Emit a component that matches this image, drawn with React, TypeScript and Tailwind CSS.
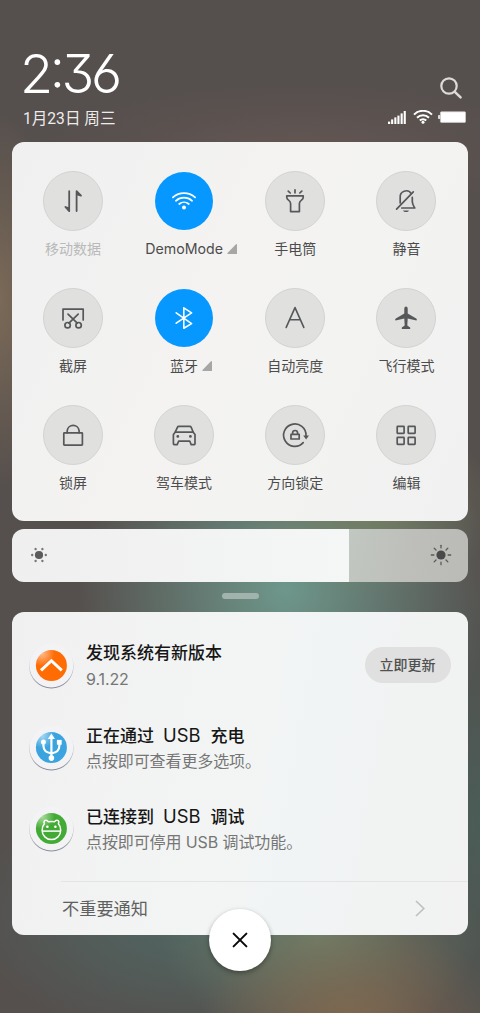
import type { ReactNode } from "react";

type Tile = {
  label: string;
  icon: ReactNode;
  active?: boolean;
  disabled?: boolean;
  expandable?: boolean;
};

const tiles: Tile[] = [
  {
    label: "移动数据",
    disabled: true,
    icon: (
      <g strokeWidth="1.8" strokeLinejoin="round" fill="currentColor">
        <path d="M26.2 20.2V40.2L22.4 36L26.2 37.4" />
        <path d="M33.6 40V20.2L38 24.6L33.6 23.2" />
      </g>
    ),
  },
  {
    label: "DemoMode",
    active: true,
    expandable: true,
    icon: (
      <g strokeWidth="1.7">
        <path d="M18.9 26.4A16.6 16.6 0 0 1 41.1 26.4" />
        <path d="M21.9 29.8A12.2 12.2 0 0 1 38.1 29.8" />
        <path d="M25.2 33A7.4 7.4 0 0 1 34.8 33" />
        <circle cx="30" cy="36.6" r="2" fill="currentColor" stroke="none" />
      </g>
    ),
  },
  {
    label: "手电筒",
    icon: (
      <>
        <path d="M21.8 24.8H38.2V26.6C38.2 29.4 34.4 29 34.4 32.6V40.6H25.6V32.6C25.6 29 21.8 29.4 21.8 26.6Z" />
        <path d="M30 18.8V21.8M23.2 20.1L25.2 22M36.8 20.1L34.8 22" />
      </>
    ),
  },
  {
    label: "静音",
    icon: (
      <>
        <path d="M24.2 32V26.5A6 6 0 0 1 35.2 22.6" />
        <path d="M36.3 26.3V30.5C36.3 33.5 37.6 35 38.8 37H25.8" />
        <path d="M20.6 38.2L37.3 20.8" />
        <path d="M27 39.4H33C32 41.4 28 41.4 27 39.4Z" fill="currentColor" stroke="none" />
      </>
    ),
  },
  {
    label: "截屏",
    icon: (
      <>
        <path d="M20 32V21.1H40.2V32" />
        <path d="M25 26.2L34.3 35.2M35.2 26.2L25.9 35.2" />
        <circle cx="24.6" cy="37.2" r="2.7" />
        <circle cx="35.6" cy="37.2" r="2.7" />
      </>
    ),
  },
  {
    label: "蓝牙",
    active: true,
    expandable: true,
    icon: <path d="M22.2 24.8L37.6 35.6L29.8 40.2V19.8L37.6 24.8L22.2 35.2" strokeWidth="1.6" />,
  },
  {
    label: "自动亮度",
    icon: <path d="M21.2 39.4L30 19.6L38.8 39.4M24.8 31.8H35.2" strokeWidth="1.6" />,
  },
  {
    label: "飞行模式",
    icon: (
      <path
        d="M30 18.5C31.1 18.5 31.7 19.5 31.7 20.7V25.4L40.2 30.6C41 31.2 41 32.2 40.4 32.6L31.7 30.4L31.3 37.4L34.2 39.4V40.9H25.8V39.4L28.7 37.4L28.3 30.4L19.6 32.6C19 32.2 19 31.2 19.8 30.6L28.3 25.4V20.7C28.3 19.5 28.9 18.5 30 18.5Z"
        fill="currentColor"
        stroke="none"
      />
    ),
  },
  {
    label: "锁屏",
    icon: (
      <>
        <rect x="20.8" y="27.8" width="18.6" height="12.4" rx=".6" />
        <path d="M24.2 27.8V25.6A6 6 0 0 1 36.1 25.6V27.8" />
      </>
    ),
  },
  {
    label: "驾车模式",
    icon: (
      <>
        <path d="M21.2 27.2L23.4 22.3Q23.8 21.4 24.8 21.4H35.8Q36.8 21.4 37.2 22.3L39.2 27.2" />
        <path d="M21.2 27.2H39.2L41 29.6V38.8Q41 39.6 40.2 39.6H37.2L35.8 36.2H24.6L23.2 39.6H20.2Q19.4 39.6 19.4 38.8V29.6Z" />
        <circle cx="23.8" cy="31.4" r="1.4" fill="currentColor" stroke="none" />
        <circle cx="36.4" cy="31.4" r="1.4" fill="currentColor" stroke="none" />
      </>
    ),
  },
  {
    label: "方向锁定",
    icon: (
      <>
        <path d="M38.2 37.6A11.2 11.2 0 1 1 41 30.6" />
        <path d="M38.2 30.4H44L41.1 34.6Z" fill="currentColor" stroke="none" />
        <rect x="26" y="29.4" width="8.2" height="4.6" />
        <path d="M27.6 29.2V28A2.5 2.5 0 0 1 32.6 28V29.2" />
      </>
    ),
  },
  {
    label: "编辑",
    icon: (
      <>
        <rect x="21.2" y="21.4" width="6.9" height="6.9" rx=".5" />
        <rect x="32.2" y="21.4" width="6.9" height="6.9" rx=".5" />
        <rect x="21.2" y="32.4" width="6.9" height="6.9" rx=".5" />
        <rect x="32.2" y="32.4" width="6.9" height="6.9" rx=".5" />
      </>
    ),
  },
];

function QuickTile({ label, icon, active, disabled, expandable }: Tile) {
  return (
    <div className="flex h-[117.3px] flex-col items-center">
      <div
        className={
          active
            ? "m-px size-[58px] rounded-full bg-[#0698ff] text-white"
            : "size-[60px] rounded-full border border-[#d3d3d3] bg-[#e0e0df] text-[#555759]"
        }
      >
        <svg
          viewBox="1 1 58 58"
          className="size-full"
          fill="none"
          stroke="currentColor"
          strokeWidth="1.7"
          strokeLinecap="round"
          strokeLinejoin="round"
        >
          {icon}
        </svg>
      </div>
      <div
        className={
          disabled
            ? "relative mt-2 text-sm leading-5 text-[#b9b9b9]"
            : "relative mt-2 text-sm leading-5 text-[#4c4c4c]"
        }
      >
        <span className={label === "DemoMode" ? "text-[14.2px]" : ""}>{label}</span>
        {expandable && (
          <svg viewBox="0 0 10 10" className="absolute top-[5px] left-full ml-[4px] size-[10px]">
            <path d="M9.2 0Q10 0 10 .8V10H.8Q0 10 .5 9Z" fill="#a6a6a6" />
          </svg>
        )}
      </div>
    </div>
  );
}

function BadgeFrame({ id, top, bottom, children }: { id: string; top: string; bottom: string; children: ReactNode }) {
  return (
    <svg viewBox="0 0 48 48" className="size-12 shrink-0">
      <defs>
        <radialGradient id={id} cx=".2" cy=".12" r=".8">
          <stop offset="0" stopColor={top} />
          <stop offset=".5" stopColor={bottom} />
          <stop offset="1" stopColor={bottom} />
        </radialGradient>
        <linearGradient id={id + "-rim"} x1="0" y1="0" x2="0" y2="1">
          <stop offset=".25" stopColor="#e6e6e9" />
          <stop offset="1" stopColor="#858997" />
        </linearGradient>
      </defs>
      <circle cx="24.4" cy="24.3" r="22.2" fill={"url(#" + id + "-rim)"} />
      <circle cx="24.4" cy="23.5" r="21.9" fill="#f3f3f6" />
      <circle cx="24.4" cy="23.5" r="15.5" fill={"url(#" + id + ")"} />
      <g transform="translate(.4 .3)">{children}</g>
    </svg>
  );
}

const notices = [
  {
    title: "发现系统有新版本",
    text: "9.1.22",
    action: "立即更新",
    badge: (
      <BadgeFrame id="update" top="#ffb98a" bottom="#ff6c04">
        <path d="M13.6 28L24 18.4L34.4 28" fill="none" stroke="#fff" strokeWidth="3" />
      </BadgeFrame>
    ),
  },
  {
    title: (
      <>
        正在通过<Usb />充电
      </>
    ),
    text: "点按即可查看更多选项。",
    badge: (
      <BadgeFrame id="usb" top="#a5d6f2" bottom="#3ba4df">
        <g fill="none" stroke="#fff" strokeWidth="2.2" strokeLinejoin="round">
          <path d="M24 13V34" />
          <path d="M16 18.5V21C16 26.5 18.5 28.3 24 29C29.5 28.3 32 26.5 32 21V18.5" />
        </g>
        <g fill="#fff">
          <path d="M24 9.3L27.6 14.6H20.4Z" />
          <circle cx="16" cy="17.8" r="2.5" />
          <rect x="29.5" y="15.6" width="4.8" height="4.8" />
          <circle cx="24" cy="33.8" r="2.8" />
        </g>
      </BadgeFrame>
    ),
  },
  {
    title: (
      <>
        已连接到<Usb />调试
      </>
    ),
    text: "点按即可停用 USB 调试功能。",
    badge: (
      <BadgeFrame id="debug" top="#a9dc9b" bottom="#43ab35">
        <g fill="none" stroke="#fff" strokeWidth="1.5" strokeLinejoin="round">
          <path d="M14.7 25C14.7 21.8 15.5 20 17 18.4C15.6 15.4 18.8 13.4 20.8 16.4Q24 15.8 27.2 16.4C29.2 13.4 32.4 15.4 31 18.4C32.5 20 33.3 21.8 33.3 25A9.3 9.3 0 0 1 14.7 25Z" />
          <path d="M14.9 25.8H33.1" />
        </g>
        <circle cx="20" cy="21.4" r="1.3" fill="#fff" />
        <circle cx="28" cy="21.4" r="1.3" fill="#fff" />
      </BadgeFrame>
    ),
  },
];

function Usb() {
  return <span className="mr-[10px] ml-[9px] text-[18.4px] font-normal">USB</span>;
}

function StatusIcons() {
  return (
    <div className="flex items-center">
      <svg viewBox="0 0 18 13" className="h-[13px] w-[18px] fill-white">
        <rect x="0" y="10.6" width="2.2" height="2.4" />
        <rect x="3.1" y="8.4" width="2.1" height="4.6" />
        <rect x="6.3" y="6.4" width="2.1" height="6.6" />
        <rect x="9.4" y="4.6" width="2.1" height="8.4" />
        <rect x="12.6" y="2.4" width="2.1" height="10.6" />
        <rect x="15.7" y="0" width="2.1" height="13" />
      </svg>
      <svg viewBox="0 0 20 14" className="ml-[6.5px] h-[14px] w-5" fill="none" stroke="#fff" strokeWidth="2">
        <path d="M1 4.6A12.6 12.6 0 0 1 19 4.6" />
        <path d="M4 7.8A8.4 8.4 0 0 1 16 7.8" />
        <path d="M6.8 10.5A4.5 4.5 0 0 1 13.2 10.5" />
        <circle cx="10" cy="12.2" r="1.5" fill="#fff" stroke="none" />
      </svg>
      <svg viewBox="0 0 28 12" className="ml-[5px] h-3 w-7">
        <rect x="0" y="4" width="2.4" height="4" rx=".8" fill="#ddd" />
        <rect x="2.4" y=".8" width="25.2" height="10.6" rx="1" fill="#fff" stroke="#cfcccb" strokeWidth=".7" />
      </svg>
    </div>
  );
}

const highRays = [0, 45, 90, 135, 180, 225, 270, 315];
const lowDots = [0, 60, 120, 180, 240, 300];

export default function App() {
  return (
    <div className="flex h-[1013px] w-[480px] flex-col overflow-hidden bg-[#554f4d] bg-[radial-gradient(ellipse_150px_110px_at_350px_1025px,#866b4fdd,#866b4f00),radial-gradient(ellipse_160px_110px_at_320px_935px,#708069ee,#70806900),radial-gradient(ellipse_230px_130px_at_190px_915px,#4f6b67dd,#4f6b6700),radial-gradient(ellipse_90px_240px_at_480px_820px,#48605acc,#48605a00),radial-gradient(ellipse_130px_90px_at_370px_505px,#7c8460bb,#7c846000),radial-gradient(ellipse_210px_200px_at_285px_590px,#6e978b,#6a968900),radial-gradient(ellipse_60px_190px_at_0px_300px,#84705acc,#84705a00),radial-gradient(ellipse_260px_70px_at_300px_150px,#6c5b5699,#6c5b5600)] font-['Inter','Noto_Sans_CJK_SC',sans-serif]">
      <header className="flex h-[142px] shrink-0 justify-between pr-[14.5px] pl-[23px]">
        <div className="flex flex-col pt-[46.5px] text-white">
          <div className="-ml-[3px] h-[60px] text-[54px] leading-[54px] font-[260] tracking-[-3.4px] [font-feature-settings:'cv03','cv09','case']">
            2:36
          </div>
          <div className="font-[Roboto,'Noto_Sans_CJK_SC',sans-serif] text-[15.6px] leading-6 text-[#eeeceb]">1月23日 周三</div>
        </div>
        <div className="flex flex-col items-end pt-[76px]">
          <svg viewBox="0 0 24 24" className="mr-[2.5px] size-6" fill="none" stroke="#dddbda" strokeLinecap="round">
            <circle cx="10" cy="10" r="7.7" strokeWidth="2.2" />
            <path d="M15.8 15.8L21.6 21.4" strokeWidth="2.5" />
          </svg>
          <div className="mt-[10px]">
            <StatusIcons />
          </div>
        </div>
      </header>

      <section className="mr-[12.5px] ml-3 grid h-[378.5px] shrink-0 grid-cols-[repeat(4,111.2px)] content-start rounded-xl bg-[linear-gradient(115deg,#f0f0f0,#f4f3f2_45%,#f3f3f2_65%,#f0f1f0)] pt-[28.5px] pl-[5.3px]">
        {tiles.map((tile) => (
          <QuickTile key={tile.label} {...tile} />
        ))}
      </section>

      <section className="mt-2 mr-[12.5px] ml-3 flex h-[53.5px] shrink-0 overflow-hidden rounded-xl">
        <div className="flex w-[337px] items-center bg-[linear-gradient(90deg,#efefef,#f5f6f6)] pl-[18px]">
          <svg viewBox="-9 -9 18 18" className="size-[18px]" fill="#5b5b5b">
            <circle r="4.1" />
            {lowDots.map((angle) => (
              <circle key={angle} cx="6.8" r="1.2" fill="#777" transform={"rotate(" + angle + ")"} />
            ))}
          </svg>
        </div>
        <div className="flex flex-1 items-center justify-end bg-[linear-gradient(100deg,#c1c7c1,#bdbdb9_60%,#babab7)] pr-4">
          <svg viewBox="-11 -11 22 22" className="size-[22px]" fill="#4a4a4a" stroke="#5a5a5a" strokeWidth="1.3" strokeLinecap="round">
            <circle r="4.6" stroke="none" />
            {highRays.map((angle) => (
              <path key={angle} d="M7.1 0H9.7" transform={"rotate(" + angle + ")"} />
            ))}
          </svg>
        </div>
      </section>

      <div className="mx-auto mt-[11px] h-[5.5px] w-[37px] shrink-0 rounded-full bg-[#a2b3ae]" />

      <section className="mt-[13.5px] mr-[12.5px] ml-3 flex h-[322.5px] shrink-0 flex-col rounded-xl bg-[linear-gradient(100deg,#f0f0f0,#f3f5f4_48%,#f1f4f5_62%,#f1f2f1)]">
        <div className="flex h-[269px] flex-col pt-[13.5px]">
          {notices.map((notice) => (
            <article key={notice.text} className="flex h-[81.5px] shrink-0 items-center pr-[17px] pl-[15px]">
              {notice.badge}
              <div className="ml-[11px] flex flex-1 flex-col">
                <h2 className="h-[26px] text-[17px] leading-[26px] font-medium text-[#161616]">{notice.title}</h2>
                <p className="h-[26px] text-[16px] leading-[26px] tracking-[-0.1px] text-[#767676]">{notice.text}</p>
              </div>
              {notice.action && (
                <button className="-mt-[2px] h-9 w-[86px] rounded-full bg-[#dfe0df] text-sm font-medium text-[#505050]">{notice.action}</button>
              )}
            </article>
          ))}
        </div>
        <div className="ml-[49px] flex flex-1 items-center justify-between border-t border-[#e3e5e4] pr-[42.5px] pl-px">
          <span className="pt-px text-[17.2px] text-[#606060]">不重要通知</span>
          <svg viewBox="0 0 10 17" className="h-[17px] w-[10px]" fill="none" stroke="#bfc0c0" strokeWidth="1.7">
            <path d="M1 1L8.8 8.5L1 16" />
          </svg>
        </div>
      </section>

      <button className="relative z-10 mx-auto -mt-[26px] flex size-[62px] shrink-0 items-center justify-center rounded-full bg-white shadow-[0_2px_5px_rgba(0,0,0,0.35)]">
        <svg viewBox="0 0 16 16" className="size-4" stroke="#080808" strokeWidth="2" strokeLinecap="round">
          <path d="M1.6 1.6L14.4 14.4M14.4 1.6L1.6 14.4" />
        </svg>
      </button>
    </div>
  );
}
